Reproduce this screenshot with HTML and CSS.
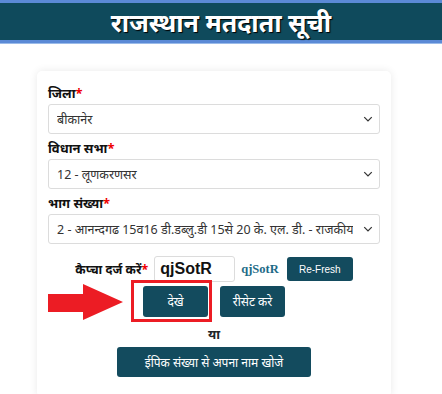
FILE: index.html
```html
<!DOCTYPE html>
<html lang="hi">
<head>
    <meta charset="UTF-8">
    <meta name="viewport" content="width=device-width, initial-scale=1.0">
    <title>राजस्थान मतदाता सूची</title>
    <link rel="stylesheet" href="styles.css">
</head>
<body>
    <header class="top-bar">
        <h1>राजस्थान मतदाता सूची</h1>
    </header>

    <div class="card">
        <label class="field-label">जिला<span class="req">*</span></label>
        <div class="select-wrap">
            <select class="form-select">
                <option>बीकानेर</option>
            </select>
            <svg class="chevron" viewBox="0 0 16 16"><path d="M2 5l6 6 6-6" fill="none" stroke="#333" stroke-width="2"/></svg>
        </div>

        <label class="field-label">विधान सभा<span class="req">*</span></label>
        <div class="select-wrap">
            <select class="form-select">
                <option>12 - लूणकरणसर</option>
            </select>
            <svg class="chevron" viewBox="0 0 16 16"><path d="M2 5l6 6 6-6" fill="none" stroke="#333" stroke-width="2"/></svg>
        </div>

        <label class="field-label">भाग संख्या<span class="req">*</span></label>
        <div class="select-wrap">
            <select class="form-select">
                <option>2 - आनन्दगढ 15व16 डी.डब्लु.डी 15से 20 के. एल. डी. - राजकीय उच्च प्राथमिक विद्यालय</option>
            </select>
            <svg class="chevron" viewBox="0 0 16 16"><path d="M2 5l6 6 6-6" fill="none" stroke="#333" stroke-width="2"/></svg>
        </div>

        <div class="captcha-row">
            <label class="captcha-label">कैप्चा दर्ज करें<span class="req">*</span></label>
            <input class="captcha-input" type="text" value="qjSotR">
            <span class="captcha-code">qjSotR</span>
            <button class="btn btn-small">Re-Fresh</button>
        </div>

        <div class="action-row">
            <div class="mark">
                <button class="btn btn-main">देखे</button>
                <span class="red-box"></span>
                <svg class="red-arrow" viewBox="0 0 75 36"><polygon points="0,10 35,10 35,0 75,18 35,36 35,28 0,28" fill="#ec1c24"/></svg>
            </div>
            <button class="btn btn-main">रीसेट करे</button>
        </div>

        <p class="or-text">या</p>

        <div class="epic-row">
            <button class="btn btn-wide">ईपिक संख्या से अपना नाम खोजे</button>
        </div>
    </div>
</body>
</html>
```

FILE: styles.css
```css
body {
    margin: 0;
    padding: 0;
    background: #fff;
    font-family: "Noto Sans", "Liberation Sans", sans-serif;
    color: #212529;
    overflow: hidden;
}

.top-bar {
    background-color: #0f4a5c;
    border-top: 3px solid #5b8ad6;
    border-bottom: 3px solid #5b8ad6;
    box-shadow: 0 1px 0 #9bbbe9;
    height: 37px;
    display: flex;
    align-items: center;
    justify-content: center;
}

.top-bar h1 {
    margin: 0;
    color: #fff;
    font-size: 25px;
    font-weight: bold;
    text-shadow: 1px 1px 1px #000;
}

.card {
    width: 332px;
    margin: 28px 0 0 37px;
    padding: 12px 11px 20px;
    background: #fff;
    border-radius: 5px;
    box-shadow: 0 0 8px rgba(0, 0, 0, 0.09);
}

.field-label {
    display: block;
    font-size: 13px;
    font-weight: bold;
    color: #111;
    line-height: 20px;
    margin-bottom: 1px;
}

.req {
    color: #e00;
}

.select-wrap {
    position: relative;
    margin-bottom: 4px;
}

.form-select {
    -webkit-appearance: none;
    appearance: none;
    width: 100%;
    height: 30px;
    padding: 0 26px 0 8px;
    border: 1px solid #dcdcdc;
    border-radius: 3px;
    background: #fff;
    font-family: inherit;
    font-size: 12.5px;
    color: #333;
    box-sizing: border-box;
}

.chevron {
    position: absolute;
    right: 7px;
    top: 10px;
    width: 10px;
    height: 10px;
    pointer-events: none;
}

.captcha-row {
    display: flex;
    align-items: center;
    justify-content: center;
    gap: 6px;
    margin-top: 12px;
}

.captcha-label {
    font-size: 12.5px;
    font-weight: bold;
    color: #111;
}

.captcha-input {
    width: 81px;
    height: 26px;
    box-sizing: border-box;
    border: 1px solid #dcdcdc;
    border-radius: 3px;
    padding: 0 5px;
    font-family: "Liberation Sans", sans-serif;
    font-size: 16px;
    font-weight: bold;
    color: #111;
}

.captcha-code {
    font-family: "Liberation Serif", serif;
    font-size: 12.5px;
    font-weight: bold;
    color: #1d6b87;
    margin-right: 2px;
}

.btn {
    background-color: #134b5e;
    color: #fff;
    border: none;
    border-radius: 3px;
    cursor: pointer;
    font-family: inherit;
}

.btn-small {
    width: 66px;
    height: 24px;
    font-family: "Liberation Sans", sans-serif;
    font-size: 10px;
}

.btn-main {
    width: 65px;
    height: 31px;
    font-size: 12px;
}

.action-row {
    display: flex;
    justify-content: center;
    gap: 12px;
    margin-top: 4px;
}

.mark {
    position: relative;
}

.red-box {
    position: absolute;
    left: -12px;
    top: -6px;
    right: -4px;
    bottom: -5px;
    border: 3px solid #ec1c24;
}

.red-arrow {
    position: absolute;
    left: -95px;
    top: -2px;
    width: 75px;
    height: 36px;
}

.or-text {
    text-align: center;
    font-size: 13px;
    font-weight: bold;
    margin: 8px 0 4px;
    line-height: 18px;
}

.epic-row {
    display: flex;
    justify-content: center;
}

.btn-wide {
    width: 194px;
    height: 30px;
    font-size: 12px;
}
```
